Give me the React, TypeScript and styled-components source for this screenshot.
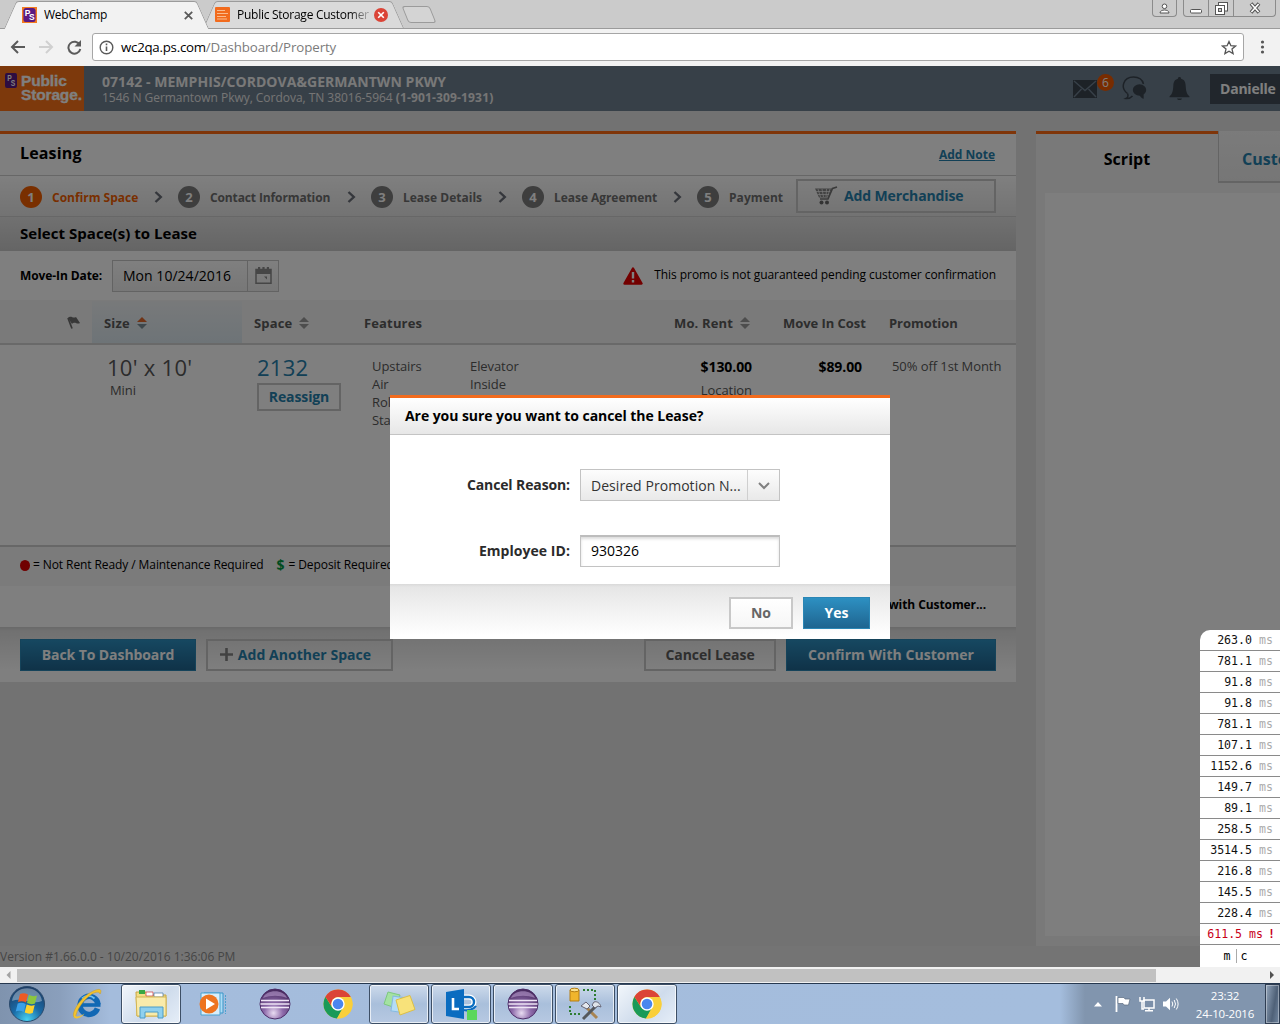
import React from "react";
import styled, { createGlobalStyle, css } from "styled-components";

const Global = createGlobalStyle`
  * { box-sizing: border-box; }
  html, body { margin: 0; padding: 0; overflow: hidden; }
  body { font-family: "Open Sans", "Noto Sans", sans-serif; font-size: 12px; color: #000; }
  button, input { font-family: inherit; margin: 0; }
  svg { display: block; flex: none; }
`;

const Desktop = styled.div`
  width: 1280px; height: 1024px; display: flex; flex-direction: column; overflow: hidden; position: relative;
`;

/* ---------- browser chrome ---------- */
const TabStrip = styled.div`
  height: 29px; flex: none; background: #cbcbcb; border-bottom: 1px solid #9b9b9b;
  display: flex; align-items: flex-end; padding-left: 10px;
`;
const edge = css<{ $active?: boolean }>`
  content: ""; position: absolute; top: 0; bottom: 0; z-index: -1;
  background: ${p => (p.$active ? "#f2f2f2" : "#dadada")};
  border-top: 1px solid #9b9b9b;
`;
const Tab = styled.div<{ $active?: boolean; $w: number }>`
  position: relative; isolation: isolate; width: ${p => p.$w}px; height: ${p => (p.$active ? 28 : 27)}px;
  margin-bottom: ${p => (p.$active ? -1 : 0)}px; margin-right: 6px;
  display: flex; align-items: center; z-index: ${p => (p.$active ? 2 : 1)};
  font-size: 12px; letter-spacing: -0.26px; white-space: pre;
  &::before { ${edge} left: 0; right: 40%; transform: skewX(-24deg); border-left: 1px solid #9b9b9b; border-top-left-radius: 3px; }
  &::after { ${edge} right: 0; left: 40%; transform: skewX(24deg); border-right: 1px solid #9b9b9b; border-top-right-radius: 3px; }
`;
const TabIcon = styled.span<{ $l?: number }>`display: flex; margin: 0 7px 0 ${p => p.$l ?? 12}px;`;
const TabTitle = styled.span<{ $fade?: boolean }>`
  flex: 1; overflow: hidden; padding-bottom: 1px;
  ${p => p.$fade && css`mask-image: linear-gradient(90deg, #000 82%, rgba(0,0,0,.3) 94%);`}
`;
const TabClose = styled.span<{ $r?: number }>`display: flex; margin-right: ${p => p.$r ?? 10}px;`;
const NewTab = styled.div`
  width: 28px; height: 17px; margin: 0 0 5px 1px; border: 1px solid #9b9b9b; border-radius: 3px; background: #d4d4d4;
  transform: skewX(22deg);
`;
const WindowButtons = styled.div`margin: 0 5px 0 auto; align-self: flex-start; display: flex; height: 17px;`;
const WinBtn = styled.span<{ $w: number; $gap?: boolean; $first?: boolean; $last?: boolean }>`
  width: ${p => p.$w}px; height: 17px; border: 1px solid #8b8b8b; border-top: 0; margin-right: ${p => (p.$gap ? 6 : -1)}px;
  border-radius: 0 0 ${p => (p.$last ? 4 : 0)}px ${p => (p.$first ? 4 : 0)}px;
  display: flex; align-items: center; justify-content: center;
`;
const Toolbar = styled.div`
  height: 37px; flex: none; background: #f2f2f2; display: flex; align-items: center; padding: 0 0 1px 10px;
`;
const NavIcon = styled.span<{ $r: number }>`display: flex; margin-right: ${p => p.$r}px;`;
const Address = styled.div`
  width: 1152px; height: 28px; background: #fff; border: 1px solid #a6a6a6; border-radius: 3px;
  display: flex; align-items: center; padding: 0 6px 0 6px; font-size: 13.3px; letter-spacing: -0.1px;
`;
const Host = styled.span`margin-left: 7px; letter-spacing: -0.26px;`;
const Path = styled.span`color: #7b7b7b; flex: 1;`;

/* ---------- page ---------- */
const Viewport = styled.div`
  position: relative; height: 901px; flex: none; background: #e4e4e4; overflow: hidden; display: flex; flex-direction: column;
`;
const Header = styled.header`height: 45px; flex: none; background: #6f8090; display: flex;`;
const Logo = styled.div`
  width: 84px; flex: none; background: #fb7218; display: flex; padding: 7px 0 0 5px; gap: 4px;
`;
const LogoWords = styled.div`
  padding-top: 1px; font: 700 15.5px/13.5px "Liberation Sans", Arial, sans-serif; color: #fff; letter-spacing: -0.15px; -webkit-text-stroke: .3px #fff;
`;
const Property = styled.div`padding: 8px 0 0 18px; color: #f2f2f2; flex: 1;`;
const PropertyName = styled.div`font-size: 14px; line-height: 16px; font-weight: 700; letter-spacing: .05px;`;
const PropertyAddress = styled.div`font-size: 12px; line-height: 15px; color: #eaeaea; letter-spacing: -0.03px; b { letter-spacing: .15px; }`;
const HeaderIcons = styled.div`display: flex; padding-top: 10px; width: 137px; color: #3a444f;`;
const Mail = styled.span`position: relative; margin-top: 4px; width: 49px;`;
const Badge = styled.span`
  position: absolute; left: 24px; top: -6px; width: 17px; height: 17px; border-radius: 50%; background: #f05800; color: #fff;
  font-size: 12px; line-height: 17px; text-align: center;
`;
const Chat = styled.span`width: 47px;`;
const UserName = styled.div`
  width: 70px; height: 30px; margin-top: 8px; background: #424d59; color: #fff; font-weight: 700; font-size: 14px;
  letter-spacing: -0.22px; line-height: 30px; padding-left: 10px;
`;

const Columns = styled.div`display: flex; gap: 20px; padding-top: 20px; align-items: flex-start; height: 835px; flex: none;`;
const LeasingPanel = styled.section`width: 1016px; flex: none; border-top: 3px solid #ff6a13; background: #fff;`;
const PanelTitle = styled.div`
  height: 42px; padding: 0 21px 4px 20px; display: flex; align-items: center; justify-content: space-between;
  border-bottom: 1px solid #cfcfcf;
`;
const H1 = styled.h1`margin: 0; font-size: 16px; font-weight: 700; letter-spacing: .15px;`;
const NoteLink = styled.a`color: #2580ac; font-weight: 700; text-decoration: underline; padding-top: 4px;`;
const Stepper = styled.div`
  height: 41px; display: flex; align-items: center; padding: 0 20px; background: linear-gradient(#fff, #e6e6e6);
  border-bottom: 1px solid #cfcfcf;
`;
const StepItem = styled.div<{ $w: number; $on?: boolean }>`
  width: ${p => p.$w}px; flex: none; display: flex; align-items: center; white-space: nowrap; padding-top: 2px;
  font-weight: 700; font-size: 12px; color: ${p => (p.$on ? "#f25f00" : "#6e6e6e")};
`;
const StepNo = styled.span<{ $on?: boolean }>`
  width: 22px; height: 22px; border-radius: 50%; margin-right: 10px; color: #fff; font-size: 13px; line-height: 22px; text-align: center;
  background: ${p => (p.$on ? "#f25f00" : "#7c7c7c")};
`;
const StepLabel = styled.span<{ $ls: number }>`letter-spacing: ${p => p.$ls}px;`;
const StepChevron = styled.span`margin: 0 15px 0 auto;`;

type Kind = "primary" | "outline" | "plain";
const Button = styled.button<{ $kind: Kind; $w: number; $h?: number; $c?: string; $ls?: number }>`
  width: ${p => p.$w}px; height: ${p => p.$h ?? 32}px; flex: none; padding: 0 0 1px; display: flex; align-items: center; justify-content: center;
  font-size: 14px; font-weight: 700; letter-spacing: ${p => p.$ls ?? 0}px; white-space: nowrap; border-radius: 0;
  ${p => p.$kind === "primary"
    ? css`color: #fff; border: 1px solid #2a86b5; background: linear-gradient(#2d90c2, #1f6590);`
    : css`color: ${p.$c ?? "#2580ac"}; border: 2px solid #c8c8c8; background: ${p.$kind === "plain" ? "linear-gradient(#fff, #f6f6f6)" : "transparent"};`}
`;
const CartButton = styled(Button)`justify-content: flex-start; padding: 0 0 1px 16px; gap: 6px; margin: -1px 0 0 auto;`;
const PlusButton = styled(Button)`gap: 4px; padding-right: 9px;`;

const SectionBar = styled.h2`
  height: 34px; margin: 0; padding: 0 20px; line-height: 32px; font-size: 15px; font-weight: 700; letter-spacing: .04px;
  background: linear-gradient(#e2e2e2, #cacaca);
`;
const MoveInRow = styled.div`height: 50px; display: flex; align-items: center; padding: 0 20px; border-bottom: 1px solid #f4f4f4;`;
const FieldLabel = styled.label`font-weight: 700; letter-spacing: -0.1px; width: 92px;`;
const DateBox = styled.div`
  width: 167px; height: 32px; border: 1px solid #c6c6c6; display: flex; background: linear-gradient(#fff, #efefef);
`;
const DateValue = styled.span`flex: 1; font-size: 14px; letter-spacing: .03px; line-height: 30px; padding-left: 10px; border-right: 1px solid #c6c6c6;`;
const DateButton = styled.span`width: 30px; display: flex; align-items: center; justify-content: center;`;
const Promo = styled.div`margin-left: auto; display: flex; align-items: center; gap: 11px; letter-spacing: -0.06px; span { padding-bottom: 2px; }`;

const grid = css`display: grid; grid-template-columns: 92px 150px 110px 108px 205px 101px 111px 1fr;`;
const HeadRow = styled.div`${grid} height: 44px; background: #f4f4f4; border-bottom: 2px solid #d2d2d2; flex: none;`;
const Head = styled.div<{ $sorted?: boolean; $pl?: number }>`
  display: flex; align-items: center; gap: 7px; padding: 1px 0 0 ${p => p.$pl ?? 12}px; font-size: 13px; font-weight: 700; letter-spacing: .15px;
  color: #5a5a5a; white-space: nowrap;
  ${p => p.$sorted && css`background: linear-gradient(#f0f3f5, #dce8ef);`}
`;
const Tight = styled.span`letter-spacing: -0.05px;`;
const Row = styled.div`${grid} height: 200px; color: #585858; font-size: 13px; letter-spacing: -0.08px;`;
const Size = styled.div`padding: 8px 0 0 15px;`;
const Big = styled.div<{ $link?: boolean }>`
  font-size: 22px; line-height: 28px; letter-spacing: .28px; ${p => p.$link && "color: #2580ac;"}
`;
const Mini = styled.div`padding-left: 3px; line-height: 18px;`;
const SpaceCell = styled.div`padding: 8px 0 0 15px; button { margin-top: 2px; }`;
const Lines = styled.div<{ $pl: number }>`padding: 12px 0 0 ${p => p.$pl}px; line-height: 18px;`;
const Money = styled.div<{ $pr: number }>`padding: 12px ${p => p.$pr}px 0 0; text-align: right; line-height: 18px;
  b { display: block; font-size: 14px; line-height: 19px; color: #000; margin-bottom: 5px; }`;

const Legend = styled.div`
  height: 41px; border-top: 2px solid #cfcfcf; background: #f6f6f6; display: flex; align-items: center; padding: 0 20px 4px; letter-spacing: -0.09px;
  white-space: nowrap;
`;
const Dot = styled.i`width: 10px; height: 11px; border-radius: 50%; background: #e00000; margin: 2px 3px 0 0;`;
const Dollar = styled.b`color: #009640; font-size: 14px; margin: 0 4px 0 13px;`;
const ConfirmNote = styled.div`
  height: 41px; padding: 0 30px 4px 0; display: flex; align-items: center; justify-content: flex-end; font-weight: 700; letter-spacing: -0.08px;
`;
const Actions = styled.div`
  height: 55px; padding: 12px 20px 11px; display: flex; gap: 10px; background: linear-gradient(#d2d2d2 0, #e2e2e2 4px, #fff 44px);
`;
const Spacer = styled.span`flex: 1;`;

const ScriptPanel = styled.aside`width: 244px; height: 815px; flex: none; background: #f3f3f3; display: flex; flex-direction: column; overflow: hidden;`;
const ScriptTabs = styled.div`display: flex; height: 62px; flex: none;`;
const ScriptTab = styled.div<{ $on?: boolean }>`
  font-size: 16px; font-weight: 700; letter-spacing: .05px; line-height: 50px; flex: none;
  ${p => p.$on
    ? css`width: 182px; border-top: 3px solid #ff6a13; text-align: center;`
    : css`width: 120px; height: 52px; line-height: 56px; padding-left: 23px; color: #2580ac; background: linear-gradient(#f6f6f6, #ededed); border: solid #c8c8c8; border-width: 0 0 2px 1px;`}
`;
const ScriptBody = styled.div`height: 743px; margin-left: 9px; background: #fdfdfd;`;
const Version = styled.footer`height: 21px; flex: none; line-height: 22px; color: #8c8c8c; background: #e9e9e9;`;

const Overlay = styled.div`
  position: absolute; inset: 0; background: rgba(0, 0, 0, .5); display: flex; justify-content: center; align-items: flex-start; padding-top: 329px;
`;
const Dialog = styled.div`width: 500px; height: 244px; background: #fff; border-top: 3px solid #f26b1d; display: flex; flex-direction: column;`;
const DialogTitle = styled.div`
  height: 37px; line-height: 35px; padding-left: 15px; font-size: 14px; font-weight: 700; letter-spacing: -0.06px;
  background: linear-gradient(#fff, #e7e7e7); border-bottom: 1px solid #c4c4c4; flex: none;
`;
const DialogForm = styled.div`flex: 1; padding-top: 34px; display: flex; flex-direction: column; gap: 34px;`;
const FormRow = styled.div`display: grid; grid-template-columns: 180px 200px; gap: 10px; height: 32px; align-items: center;`;
const FormLabel = styled.label<{ $ls: number }>`
  text-align: right; font-size: 14px; font-weight: 700; color: #2b2b2b; padding-bottom: 2px; letter-spacing: ${p => p.$ls}px;
`;
const Select = styled.div`
  height: 32px; border: 1px solid #c3c3c3; display: flex; background: linear-gradient(#fdfdfd, #e9e9e9); font-size: 14px; color: #333;
`;
const SelectValue = styled.span`flex: 1; line-height: 31px; padding-left: 10px; letter-spacing: .05px; border-right: 1px solid #cfcfcf; white-space: nowrap;`;
const SelectArrow = styled.span`width: 31px; display: flex; align-items: center; justify-content: center; padding-top: 2px;`;
const TextInput = styled.input`
  width: 200px; height: 32px; border: 1px solid #c3c3c3; border-top: 2px solid #bdbdbd; border-radius: 0; padding: 0 0 2px 10px; font-size: 14px;
  box-shadow: inset 0 2px 3px rgba(0,0,0,.14); outline: 0; color: #000;
`;
const DialogActions = styled.div`
  height: 55px; flex: none; padding: 13px 20px 0 0; display: flex; justify-content: flex-end; gap: 10px;
  background: linear-gradient(#d9d9d9 0, #e6e6e6 3px, #ffffff 52px);
`;

/* ---------- request timings ---------- */
const Timings = styled.div`
  position: absolute; right: 0; bottom: 0; width: 80px; background: #fff; border-top-left-radius: 10px;
  font: 11.6px/20px "DejaVu Sans Mono", "Liberation Mono", monospace;
`;
const Timing = styled.div<{ $slow?: boolean }>`
  height: 21px; border-bottom: 1px solid #8a8a8a; text-align: right; padding-right: ${p => (p.$slow ? 5 : 7)}px; white-space: pre;
  color: ${p => (p.$slow ? "#c80018" : "#111")};
  small { font-size: inherit; color: #ababab; }
  b { margin-left: -2px; }
`;
const TimingLinks = styled.div`
  height: 22px; line-height: 22px; display: flex; justify-content: center; padding-right: 9px;
  i { width: 1px; margin: 4px 4px 4px 5px; background: #aaa; }
`;

/* ---------- scrollbar and taskbar ---------- */
const ScrollBar = styled.div`height: 16px; flex: none; background: #f1f1f1; display: flex; align-items: center; padding: 0 5px 0 6px;`;
const Thumb = styled.div`width: 1139px; height: 13px; background: #c1c1c1; margin: 0 auto 0 6px;`;
const Taskbar = styled.div`
  flex: 1; display: flex; border-top: 1px solid #26384f;
  background: linear-gradient(90deg, #7f93ae 0, #8a9fbc 60px, #a4bcdc 110px, #a4bddd 1060px, #8195ae 1085px, #8195ae 100%);
`;
const TaskItem = styled.div<{ $open?: boolean; $bright?: boolean; $w?: number }>`
  width: ${p => p.$w ?? 62}px; flex: none; display: flex; align-items: center; justify-content: center; margin: 0 1px;
  ${p => p.$open && css`
    width: 60px; border: 1px solid #3d4f66; border-radius: 3px; box-shadow: inset 0 0 0 1px rgba(255,255,255,.7);
    background: ${p.$bright ? "linear-gradient(135deg, #f2f6fb, #cfdcec 55%, #e6eef8)" : "linear-gradient(#cddaeb, #a9bfdb 50%, #b7c9e2)"};`}
`;
const Tray = styled.div`margin-left: auto; display: flex; align-items: center;`;
const TrayIcon = styled.span<{ $l: number }>`margin-left: ${p => p.$l}px;`;
const Clock = styled.div`width: 60px; margin: 1px 10px 0 16px; text-align: center; color: #fff; font-size: 11.5px; line-height: 17.5px; letter-spacing: -0.16px;`;
const ShowDesktop = styled.div`width: 15px; height: 40px; border: 1px solid #2e3d52; background: linear-gradient(100deg, #93a5bb, #4f6178 60%, #7186a0); box-shadow: inset 0 0 0 1px rgba(255,255,255,.35);`;

/* ---------- drawings ---------- */
const PsMark = ({ w = 15, h = 16, frame = true }: { w?: number; h?: number; frame?: boolean }) => (
  <svg width={w} height={h} viewBox="0 0 16 16" preserveAspectRatio="none">
    {frame && <rect width="16" height="16" fill="#f47b20" />}
    <rect x={frame ? 1.5 : 0} y={frame ? 1 : 0} width={frame ? 13 : 16} height={frame ? 14 : 16} rx="2.5" fill="#5a1a82" />
    <text x="3" y="9" fontSize="9" fontWeight="700" fill="#fff" fontFamily="Liberation Sans">P</text>
    <text x="7.6" y="13.5" fontSize="9" fontWeight="700" fill="#fff" fontFamily="Liberation Sans">S</text>
  </svg>
);
const Sorter = ({ on, dark }: { on?: boolean; dark?: boolean }) => (
  <svg width="10" height="12" viewBox="0 0 11 12" preserveAspectRatio="none">
    <path d="M5.5 0 11 5H0z" fill={on ? "#e0682c" : "#9a9a9a"} />
    <path d="M5.5 12 0 7h11z" fill={dark ? "#7d8f98" : "#9a9a9a"} />
  </svg>
);
const Chevron = () => (
  <svg width="9" height="12" viewBox="0 0 9 12"><path d="M1.5 1 6.800 6 1.500 11" fill="none" stroke="#6a6f78" strokeWidth="2.400" /></svg>
);
const ChromeMark = () => (
  <svg width="30" height="30" viewBox="0 0 30 30">
    <circle cx="15" cy="15" r="14.5" fill="#f9cf3a" />
    <path d="M2.4 7.8A14.5 14.5 0 0 0 14 29.5L20.8 18.4 15 15 9.2 18.4z" fill="#1a9a58" />
    <path d="M2.4 7.8A14.5 14.5 0 0 1 27.8 8H15a7 7 0 0 0-6.3 9.5z" fill="#db4437" />
    <path d="M15 15h6.8L14 29.5h1A14.5 14.5 0 0 0 27.8 8H15z" fill="#f9cf3a" />
    <circle cx="15" cy="15" r="6.7" fill="#fff" /><circle cx="15" cy="15" r="5.3" fill="#4a86ee" />
  </svg>
);
const EclipseMark = () => (
  <svg width="32" height="32" viewBox="0 0 32 32">
    <defs><radialGradient id="ecl" cx=".45" cy=".8" r=".9"><stop offset="0" stopColor="#e9dcf2" /><stop offset=".35" stopColor="#8d6aaa" /><stop offset="1" stopColor="#331848" /></radialGradient></defs>
    <circle cx="16" cy="16" r="15" fill="url(#ecl)" stroke="#4d2d68" />
    <path d="M4 10C7 1 25 1 28 10 20 7 12 7 4 10z" fill="#b79bcd" opacity=".6" />
    <path d="M2 12.5h28M1.5 16h29M2 19.5h28" stroke="#efe6f6" strokeWidth="1.5" />
  </svg>
);
const StartMark = () => (
  <svg width="38" height="38" viewBox="0 0 38 38">
    <defs><radialGradient id="orb" cx=".5" cy=".95" r=".95"><stop offset="0" stopColor="#47d2f2" /><stop offset=".45" stopColor="#1a6aa6" /><stop offset="1" stopColor="#1b3a63" /></radialGradient></defs>
    <circle cx="19" cy="19" r="17.5" fill="url(#orb)" stroke="#2b4a6c" />
    <path d="M4 16C6 -1 32 -1 34 16 24 20 14 12 4 16z" fill="#fff" opacity=".35" />
    <path d="M12 9q4-1.500 8 .5l-2 8q-4-2-8-.5z" fill="#ee5a24" />
    <path d="M21 10q4 2 8 .5l-2 8q-4 1.500-8-.5z" fill="#8cc63f" />
    <path d="M9.700 18.500q4-1.500 8 .5l-2 8q-4-2-8-.5z" fill="#3aa0e8" />
    <path d="M18.700 19.500q4 2 8 .5l-2 8q-4 1.500-8-.5z" fill="#fdd22e" />
  </svg>
);
const IeMark = () => (
  <svg width="32" height="32" viewBox="0 0 32 32">
    <path d="M26.500 20.500A9 9 0 1 1 27 16.500" fill="none" stroke="#1268b4" strokeWidth="5.500" />
    <path d="M10 17h19.500" stroke="#1268b4" strokeWidth="3.600" />
    <path d="M11 10.500c3.500-3.500 9-3.500 12.500 0" stroke="#6fc0f2" strokeWidth="1.800" fill="none" />
    <path d="M4.500 30C-2 28 8 12 17 6c6-4 12-6 12.800-3.500.5 1.500-.8 3.500-.8 3.500 0-2.500-4-2.500-8 0C13 11 5 22 4.500 30z" fill="#f2c230" stroke="#c99a1c" strokeWidth=".5" />
    <path d="M3.500 25c0 5 5 4 10 .5-2.500 3.500-7.500 6-10 4.500-1-1-.8-3 0-5z" fill="#f2c230" />
  </svg>
);
const FolderMark = () => (
  <svg width="34" height="32" viewBox="0 0 34 32">
    <path d="M2 4h10l2 3h18v21H3z" fill="#f3dd86" stroke="#c9a640" /><path d="M5 2h6v4H5z" fill="#39a845" /><path d="M12 4h7v4h-7z" fill="#fff" stroke="#c33" strokeWidth=".7" /><path d="M20 5h9v4h-9z" fill="#fff" stroke="#47a" strokeWidth=".7" />
    <path d="M2 9h30v19H3z" fill="#f9ebab" stroke="#d3b552" />
    <path d="M6 30V19h23v11h-5v-6H11v6z" fill="#8fd0ee" stroke="#4a9cc8" />
  </svg>
);
const MediaMark = () => (
  <svg width="30" height="28" viewBox="0 0 30 28">
    <path d="M7 3h19v20H7z" fill="#aedcf5" stroke="#3b95c8" /><path d="M4 3h19v22H4z" fill="#d8eefa" stroke="#4ba2d0" />
    <path d="M28.500 5v19" stroke="#4ba2d0" strokeDasharray="2 1" />
    <circle cx="12" cy="14" r="9.500" fill="#ee7420" /><path d="M9 8.500 18 14l-9 5.500z" fill="#fff" />
  </svg>
);
const NotesMark = () => (
  <svg width="34" height="28" viewBox="0 0 34 28">
    <path d="m6 2 12 3-4 13L2 14z" fill="#a4e2a2" stroke="#7dc880" /><path d="M10 7h14v15H10z" fill="#b4dcf6" stroke="#86b9de" transform="rotate(8 17 14)" />
    <path d="m14 10 14-4.500 5 14L18 25z" fill="#f8e27a" stroke="#dcbf48" />
  </svg>
);
const LyncMark = () => (
  <svg width="32" height="32" viewBox="0 0 32 32">
    <path d="M1 4 19 1v30L1 28z" fill="#0a6cc0" /><path d="M8 10v11h6" stroke="#fff" strokeWidth="2.600" fill="none" />
    <path d="M19 9h5a5 5 0 0 1 0 10h-5" fill="none" stroke="#fff" strokeWidth="5" /><path d="M19 9h5a5 5 0 0 1 0 10h-5" fill="none" stroke="#0a6cc0" strokeWidth="2.400" />
    <path d="M19 22c4 1 10-1 12-4" stroke="#0a6cc0" strokeWidth="2.200" fill="none" />
    <path d="M22 22h10v10H22z" fill="#5bd75b" />
  </svg>
);
const ToolsMark = () => (
  <svg width="34" height="34" viewBox="0 0 34 34">
    <path d="M2 3h9v11H2z" fill="#f0b52c" stroke="#b57d12" /><ellipse cx="6.500" cy="3" rx="4.500" ry="1.800" fill="#fbe08a" stroke="#b57d12" />
    <path d="M15 3h12v10M2 19v8h12" stroke="#2e7d32" strokeWidth="2" strokeDasharray="2 2" fill="none" />
    <path d="m16 18 13 13" stroke="#a88452" strokeWidth="3" /><path d="M15 32 29 18" stroke="#55585c" strokeWidth="3" />
    <path d="m13 19 5-4 4 4-3 3z" fill="#e4e8ee" stroke="#667" /><path d="M26 15c3-1 6 1 7 5l-3-1-3 2-3-3z" fill="#dfe4ea" stroke="#667" />
  </svg>
);

const timings = ["263.0", "781.1", "91.8", "91.8", "781.1", "107.1", "1152.6", "149.7", "89.1", "258.5", "3514.5", "216.8", "145.5", "228.4"];
const steps = [
  { label: "Confirm Space", w: 158, ls: 0 },
  { label: "Contact Information", w: 193, ls: -0.12 },
  { label: "Lease Details", w: 151, ls: 0 },
  { label: "Lease Agreement", w: 175, ls: -0.05 },
  { label: "Payment", w: 90, ls: 0.08 },
];

function Browser() {
  return (
    <>
      <TabStrip>
        <Tab $active $w={193}>
          <TabIcon><PsMark /></TabIcon>
          <TabTitle>WebChamp</TabTitle>
          <TabClose><svg width="9" height="9" viewBox="0 0 9 9"><path d="m.8.800 7.400 7.400m0-7.400L.8 8.200" stroke="#5a5a5a" strokeWidth="1.800" /></svg></TabClose>
        </Tab>
        <Tab $w={189}>
          <TabIcon $l={6}><svg width="15" height="15" viewBox="0 0 15 15"><rect width="15" height="15" rx="1" fill="#f26b1d" /><path d="M2 3.500h8M2 6.500h11M2 9.500h9M2 12h10" stroke="#fbc49a" strokeWidth=".9" /></svg></TabIcon>
          <TabTitle $fade>Public Storage Customer</TabTitle>
          <TabClose><svg width="14" height="14" viewBox="0 0 14 14"><circle cx="7" cy="7" r="7" fill="#db4437" /><path d="m4.200 4.200 5.600 5.600m0-5.600L4.200 9.800" stroke="#fff" strokeWidth="1.600" /></svg></TabClose>
        </Tab>
        <NewTab />
        <WindowButtons>
          <WinBtn $w={25} $gap $first $last><svg width="11" height="11" viewBox="0 0 11 11"><circle cx="5.500" cy="3.300" r="2.300" fill="#fff" stroke="#555" /><path d="M1 10c0-4 9-4 9 0z" fill="#fff" stroke="#555" /></svg></WinBtn>
          <WinBtn $w={26} $first><svg width="13" height="12" viewBox="0 0 13 12"><rect x=".5" y="7.500" width="11" height="3.500" rx="1" fill="#fff" stroke="#555" /></svg></WinBtn>
          <WinBtn $w={26}><svg width="13" height="13" viewBox="0 0 13 13"><rect x="3.500" y=".5" width="9" height="8.500" fill="#fff" stroke="#555" /><rect x=".5" y="3.500" width="9" height="9" fill="#fff" stroke="#555" /><rect x="3.500" y="6.500" width="3" height="3" fill="#ccc" stroke="#555" /></svg></WinBtn>
          <WinBtn $w={43} $last><svg width="12" height="12" viewBox="0 0 12 12"><path d="m2 1.500 8 9M10 1.500l-8 9" stroke="#555" strokeWidth="3.600" /><path d="m2.400 2 7.200 8M9.600 2l-7.200 8" stroke="#fff" strokeWidth="1.600" /></svg></WinBtn>
        </WindowButtons>
      </TabStrip>
      <Toolbar>
        <NavIcon $r={14}><svg width="15" height="14" viewBox="0 0 15 14"><path d="M15 7H2M8 1 2 7l6 6" stroke="#5a5a5a" strokeWidth="2" fill="none" /></svg></NavIcon>
        <NavIcon $r={13}><svg width="15" height="14" viewBox="0 0 15 14"><path d="M0 7h13M7 1l6 6-6 6" stroke="#d0d0d0" strokeWidth="2" fill="none" /></svg></NavIcon>
        <NavIcon $r={10}><svg width="15" height="15" viewBox="0 0 15 15"><path d="M12.800 5A6 6 0 1 0 13.300 9" stroke="#5a5a5a" strokeWidth="2" fill="none" /><path d="M14 0v6.500H7.500z" fill="#5a5a5a" /></svg></NavIcon>
        <Address>
          <svg width="15" height="15" viewBox="0 0 15 15"><circle cx="7.500" cy="7.500" r="6.300" fill="none" stroke="#5a5a5a" strokeWidth="1.400" /><path d="M7.500 6.500v4.500M7.500 3.500v1.700" stroke="#5a5a5a" strokeWidth="1.600" /></svg>
          <Host>wc2qa.ps.com</Host><Path>/Dashboard/Property</Path>
          <svg width="16" height="15" viewBox="0 0 16 15"><path d="m8 1.500 1.900 4.200 4.600.4-3.500 3 1.100 4.500L8 11.200l-4.100 2.400L5 9.100l-3.500-3 4.600-.4z" fill="none" stroke="#555" strokeWidth="1.300" /></svg>
        </Address>
        <svg width="36" height="14" viewBox="0 0 36 14"><circle cx="18.500" cy="2" r="1.600" fill="#555" /><circle cx="18.500" cy="7" r="1.600" fill="#555" /><circle cx="18.500" cy="12" r="1.600" fill="#555" /></svg>
      </Toolbar>
    </>
  );
}

function PageHeader() {
  return (
    <Header>
      <Logo><PsMark w={12} h={15} frame={false} /><LogoWords>Public<br />Storage.</LogoWords></Logo>
      <Property>
        <PropertyName>07142 - MEMPHIS/CORDOVA&amp;GERMANTWN PKWY</PropertyName>
        <PropertyAddress>1546 N Germantown Pkwy, Cordova, TN 38016-5964 <b>(1-901-309-1931)</b></PropertyAddress>
      </Property>
      <HeaderIcons>
        <Mail>
          <svg width="24" height="18" viewBox="0 0 24 18"><path d="M0 0h24v18H0z" fill="currentColor" /><path d="m1 1 11 9.500L23 1M1 17l7.500-8M23 17l-7.500-8" stroke="#6f8090" strokeWidth="1.400" fill="none" /></svg>
          <Badge>6</Badge>
        </Mail>
        <Chat><svg width="25" height="25" viewBox="0 0 25 25"><path d="M5.500 17.500C-2 12 1 1 11.500 1 17 1 20.500 4 21.500 8" fill="none" stroke="currentColor" strokeWidth="1.500" /><path d="M5.500 17.500c1 2 .5 4-1.500 5 3 .2 5-.8 6.500-2.500" fill="none" stroke="currentColor" strokeWidth="1.500" /><ellipse cx="17.500" cy="14" rx="6.700" ry="5.800" fill="currentColor" /><path d="M17 18c1 2 2 4 4.500 5 .5-2 0-4 0-6z" fill="currentColor" /></svg></Chat>
        <svg width="21" height="25" viewBox="0 0 21 25"><path d="M10.500 1c1 0 1.600.7 1.600 1.700C15.500 3.500 16.500 6 16.700 10c.3 6 1.300 8 3.800 10.500v.8H.5v-.8C3 18 4 16 4.300 10c.2-4 1.200-6.500 4.600-7.300C8.900 1.700 9.500 1 10.500 1z" fill="currentColor" /><path d="M8 22.500h5c-.5 2-4.500 2-5 0z" fill="currentColor" /></svg>
      </HeaderIcons>
      <UserName>Danielle</UserName>
    </Header>
  );
}

function Leasing() {
  return (
    <LeasingPanel>
      <PanelTitle><H1>Leasing</H1><NoteLink>Add Note</NoteLink></PanelTitle>
      <Stepper>
        {steps.map((s, i) => (
          <StepItem key={s.label} $w={s.w} $on={i === 0}>
            <StepNo $on={i === 0}>{i + 1}</StepNo>
            <StepLabel $ls={s.ls}>{s.label}</StepLabel>
            {i < 4 && <StepChevron><Chevron /></StepChevron>}
          </StepItem>
        ))}
        <CartButton $kind="outline" $w={200} $h={34} $ls={-0.12}>
          <svg width="24" height="19" viewBox="0 0 24 19"><path d="M1 2.500h17l-3.500 9H5z" fill="#858585" /><path d="m4 3 2.500 8M8 3l1.500 8M12.500 3 12 11M16 3l-2.500 8M2 5.500h14.500M3.500 8.500h12" stroke="#f4f4f4" strokeWidth=".7" /><path d="m23 1-4.500 1.500L14 13H6" fill="none" stroke="#747474" strokeWidth="1.600" /><circle cx="7.500" cy="16.500" r="2" fill="#666" /><circle cx="13" cy="16.500" r="2" fill="#666" /></svg>
          Add Merchandise
        </CartButton>
      </Stepper>
      <SectionBar>Select Space(s) to Lease</SectionBar>
      <MoveInRow>
        <FieldLabel>Move-In Date:</FieldLabel>
        <DateBox>
          <DateValue>Mon 10/24/2016</DateValue>
          <DateButton><svg width="17" height="17" viewBox="0 0 17 17"><path d="M1 2.500h15v13.700H1z" fill="none" stroke="#8c8c8c" strokeWidth="1.500" /><path d="M1 3h15v4H1zM3 0h2.200v3H3zM7.400 0h2.200v3H7.400zM11.800 0H14v3h-2.200z" fill="#8c8c8c" /><path d="M9 9.500h3v3z" fill="#8c8c8c" /></svg></DateButton>
        </DateBox>
        <Promo>
          <svg width="20" height="18" viewBox="0 0 20 18"><path d="M10 1.500 18.500 16.500h-17z" fill="#e60000" stroke="#e60000" strokeWidth="2.400" strokeLinejoin="round" /><path d="M10 5v6.500M10 13v2.500" stroke="#fff" strokeWidth="2.400" /></svg>
          <span>This promo is not guaranteed pending customer confirmation</span>
        </Promo>
      </MoveInRow>
      <HeadRow>
        <Head $pl={67}><svg width="14" height="13" viewBox="0 0 14 13"><path d="m1 2 4 10.500" stroke="#6e6e6e" strokeWidth="1.700" /><path d="M1 2C4-1 6 3 9 1l4 6c-3 2-5-2-8 1z" fill="#6e6e6e" /></svg></Head>
        <Head $sorted>Size <Sorter on dark /></Head>
        <Head>Space <Sorter /></Head>
        <Head>Features</Head>
        <Head $pl={214}>Mo. Rent <Sorter /></Head>
        <Head />
        <Head $pl={17}><Tight>Move In Cost</Tight></Head>
        <Head $pl={12}><Tight>Promotion</Tight></Head>
      </HeadRow>
      <Row>
        <span />
        <Size><Big>10' x 10'</Big><Mini>Mini</Mini></Size>
        <SpaceCell><Big $link>2132</Big><Button $kind="outline" $w={84} $h={28} $ls={-0.1}>Reassign</Button></SpaceCell>
        <Lines $pl={20}>Upstairs<br />Air<br />Rol<br />Sta</Lines>
        <Lines $pl={10}>Elevator<br />Inside</Lines>
        <Money $pr={14}><b>$130.00</b>Location</Money>
        <Money $pr={15}><b>$89.00</b></Money>
        <Lines $pl={15}>50% off 1st Month</Lines>
      </Row>
      <Legend><Dot />= Not Rent Ready / Maintenance Required<Dollar>$</Dollar>= Deposit Required</Legend>
      <ConfirmNote>with Customer...</ConfirmNote>
      <Actions>
        <Button $kind="primary" $w={176} $ls={-0.08}>Back To Dashboard</Button>
        <PlusButton $kind="outline" $w={187} $ls={0.04}>
          <svg width="15" height="15" viewBox="0 0 15 15"><path d="M7.500 1v13M1 7.500h13" stroke="#858585" strokeWidth="2.600" /></svg>Add Another Space
        </PlusButton>
        <Spacer />
        <Button $kind="outline" $w={132} $c="#5c5c5c" $ls={-0.05}>Cancel Lease</Button>
        <Button $kind="primary" $w={210} $ls={0.04}>Confirm With Customer</Button>
      </Actions>
    </LeasingPanel>
  );
}

function CancelDialog() {
  return (
    <Overlay>
      <Dialog>
        <DialogTitle>Are you sure you want to cancel the Lease?</DialogTitle>
        <DialogForm>
          <FormRow>
            <FormLabel $ls={-0.12}>Cancel Reason:</FormLabel>
            <Select>
              <SelectValue>Desired Promotion N...</SelectValue>
              <SelectArrow><svg width="12" height="8" viewBox="0 0 12 8"><path d="m1 1 5 5 5-5" fill="none" stroke="#808080" strokeWidth="2" /></svg></SelectArrow>
            </Select>
          </FormRow>
          <FormRow>
            <FormLabel $ls={0.05}>Employee ID:</FormLabel>
            <TextInput defaultValue="930326" />
          </FormRow>
        </DialogForm>
        <DialogActions>
          <Button $kind="plain" $w={64} $c="#666">No</Button>
          <Button $kind="primary" $w={67}>Yes</Button>
        </DialogActions>
      </Dialog>
    </Overlay>
  );
}

function Windows() {
  return (
    <>
      <ScrollBar>
        <svg width="5" height="8" viewBox="0 0 5 8"><path d="M4.500 0v8L.5 4z" fill="#a3a3a3" /></svg>
        <Thumb />
        <svg width="6" height="8" viewBox="0 0 6 8"><path d="M1 0v8l4-4z" fill="#505050" /></svg>
      </ScrollBar>
      <Taskbar>
        <TaskItem $w={52}><StartMark /></TaskItem>
        <TaskItem $w={64}><IeMark /></TaskItem>
        <TaskItem $open $bright><FolderMark /></TaskItem>
        <TaskItem $w={58}><MediaMark /></TaskItem>
        <TaskItem $w={63}><EclipseMark /></TaskItem>
        <TaskItem $w={59}><ChromeMark /></TaskItem>
        <TaskItem $open><NotesMark /></TaskItem>
        <TaskItem $open><LyncMark /></TaskItem>
        <TaskItem $open><EclipseMark /></TaskItem>
        <TaskItem $open><ToolsMark /></TaskItem>
        <TaskItem $open $bright><ChromeMark /></TaskItem>
        <Tray>
          <TrayIcon $l={0}><svg width="8" height="5" viewBox="0 0 8 5"><path d="m4 0 4 4.500H0z" fill="#fff" /></svg></TrayIcon>
          <TrayIcon $l={13}><svg width="16" height="16" viewBox="0 0 16 16"><path d="M1.500 0v16" stroke="#fff" strokeWidth="1.800" /><path d="M3 1.500h6l1 1.500h5l-1.500 6H9L8 7.500H3z" fill="#fff" stroke="#5b6b80" strokeWidth=".7" /></svg></TrayIcon>
          <TrayIcon $l={8}><svg width="16" height="16" viewBox="0 0 16 16"><path d="M5 4h10v8H5z" fill="#7b8fa9" stroke="#fff" strokeWidth="1.500" /><path d="M6 14.800h8M10 12v2.500M1 1v4h4V1M3 5v8h2" fill="none" stroke="#fff" strokeWidth="1.500" /></svg></TrayIcon>
          <TrayIcon $l={8}><svg width="16" height="14" viewBox="0 0 16 14"><path d="M0 4.500h3L7 .8v12.400L3 9.500H0z" fill="#fff" /><path d="M9 4.500q1.500 2.500 0 5M11.200 3q2.600 4 0 8M13.300 1.500q3.600 5.500 0 11" stroke="#fff" fill="none" /></svg></TrayIcon>
          <Clock>23:32<br />24-10-2016</Clock>
          <ShowDesktop />
        </Tray>
      </Taskbar>
    </>
  );
}

export default function App() {
  return (
    <Desktop>
      <Global />
      <Browser />
      <Viewport>
        <PageHeader />
        <Columns>
          <Leasing />
          <ScriptPanel>
            <ScriptTabs><ScriptTab $on>Script</ScriptTab><ScriptTab>Customer</ScriptTab></ScriptTabs>
            <ScriptBody />
          </ScriptPanel>
        </Columns>
        <Version>Version #1.66.0.0 - 10/20/2016 1:36:06 PM</Version>
        <CancelDialog />
        <Timings>
          {timings.map((t, i) => <Timing key={i}>{t}<small> ms</small></Timing>)}
          <Timing $slow>611.5 ms <b>!</b></Timing>
          <TimingLinks>m<i />c</TimingLinks>
        </Timings>
      </Viewport>
      <Windows />
    </Desktop>
  );
}
